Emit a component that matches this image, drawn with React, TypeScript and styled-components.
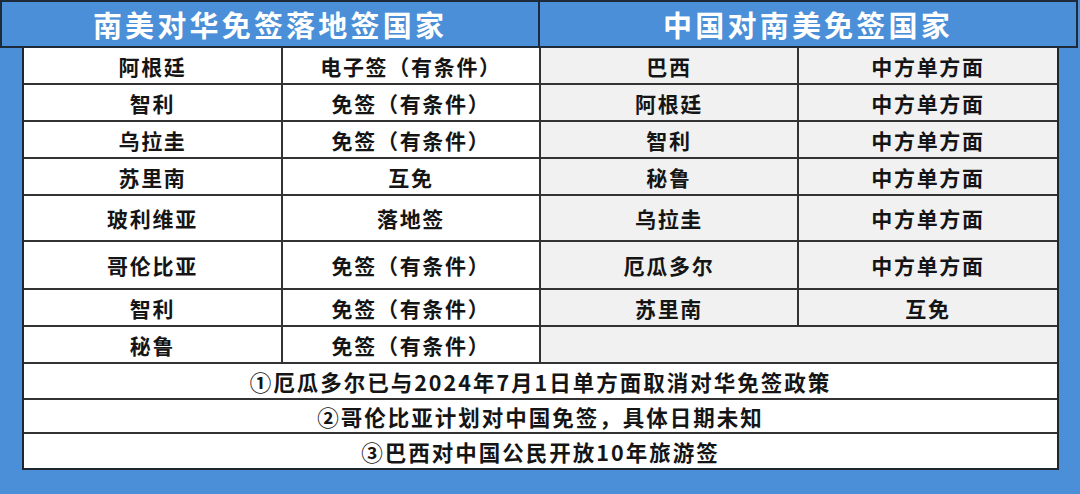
import React from "react";
import styled, { createGlobalStyle } from "styled-components";

const Global = createGlobalStyle`
  html, body { margin: 0; padding: 0; }
  body { background: #4a8fd7; font-family: "Noto Sans CJK SC", "Noto Sans", sans-serif; }
`;

const Page = styled.div`
  width: 1080px;
  height: 494px;
  background: #4a8fd7;
  overflow: hidden;
  box-sizing: border-box;
`;

const Header = styled.div`
  display: grid;
  grid-template-columns: 538px 1fr;
  width: 1078px;
  height: 48px;
  box-sizing: border-box;
  border: 2px solid #1d2a3a;
  background: #4a8fd7;
`;

const HeaderCell = styled.div<{ $divider?: boolean }>`
  display: flex;
  align-items: center;
  justify-content: center;
  color: #ffffff;
  font-weight: 700;
  font-size: 29px;
  letter-spacing: 3.2px;
  border-right: ${(p) => (p.$divider ? "2px solid #1d2a3a" : "none")};
`;

const Table = styled.div`
  margin-left: 22px;
  width: 1037px;
  box-sizing: border-box;
  border: 2px solid #1f2630;
  border-top: none;
  display: grid;
  grid-template-columns: 257px 256px 256px 258px;
  grid-template-rows: 35px 35px 35px 35px 44px 46px 35px 35px 34px 32px 34px;
  gap: 2px;
  background: #333;
`;

const Cell = styled.div<{ $tone?: "white" | "gray"; $span?: number }>`
  display: flex;
  align-items: center;
  justify-content: center;
  background: ${(p) => (p.$tone === "gray" ? "#f1f1f1" : "#ffffff")};
  grid-column: ${(p) => (p.$span ? `span ${p.$span}` : "auto")};
  color: #151515;
  font-weight: 700;
  font-size: 21px;
  letter-spacing: 1.7px;
  white-space: nowrap;
`;

const Note = styled(Cell)`
  font-size: 21.5px;
  letter-spacing: 2px;
`;

const rows: [string, string, string | null, string | null][] = [
  ["阿根廷", "电子签（有条件）", "巴西", "中方单方面"],
  ["智利", "免签（有条件）", "阿根廷", "中方单方面"],
  ["乌拉圭", "免签（有条件）", "智利", "中方单方面"],
  ["苏里南", "互免", "秘鲁", "中方单方面"],
  ["玻利维亚", "落地签", "乌拉圭", "中方单方面"],
  ["哥伦比亚", "免签（有条件）", "厄瓜多尔", "中方单方面"],
  ["智利", "免签（有条件）", "苏里南", "互免"],
  ["秘鲁", "免签（有条件）", null, null],
];

const notes = [
  "①厄瓜多尔已与2024年7月1日单方面取消对华免签政策",
  "②哥伦比亚计划对中国免签，具体日期未知",
  "③巴西对中国公民开放10年旅游签",
];

export default function App() {
  return (
    <Page>
      <Global />
      <Header>
        <HeaderCell $divider>南美对华免签落地签国家</HeaderCell>
        <HeaderCell>中国对南美免签国家</HeaderCell>
      </Header>
      <Table>
        {rows.map(([a, b, c, d], i) => (
          <React.Fragment key={i}>
            <Cell $tone="white">{a}</Cell>
            <Cell $tone="white">{b}</Cell>
            {c === null ? (
              <Cell $tone="gray" $span={2} />
            ) : (
              <>
                <Cell $tone="gray">{c}</Cell>
                <Cell $tone="gray">{d}</Cell>
              </>
            )}
          </React.Fragment>
        ))}
        {notes.map((n) => (
          <Note key={n} $tone="white" $span={4}>
            {n}
          </Note>
        ))}
      </Table>
    </Page>
  );
}
